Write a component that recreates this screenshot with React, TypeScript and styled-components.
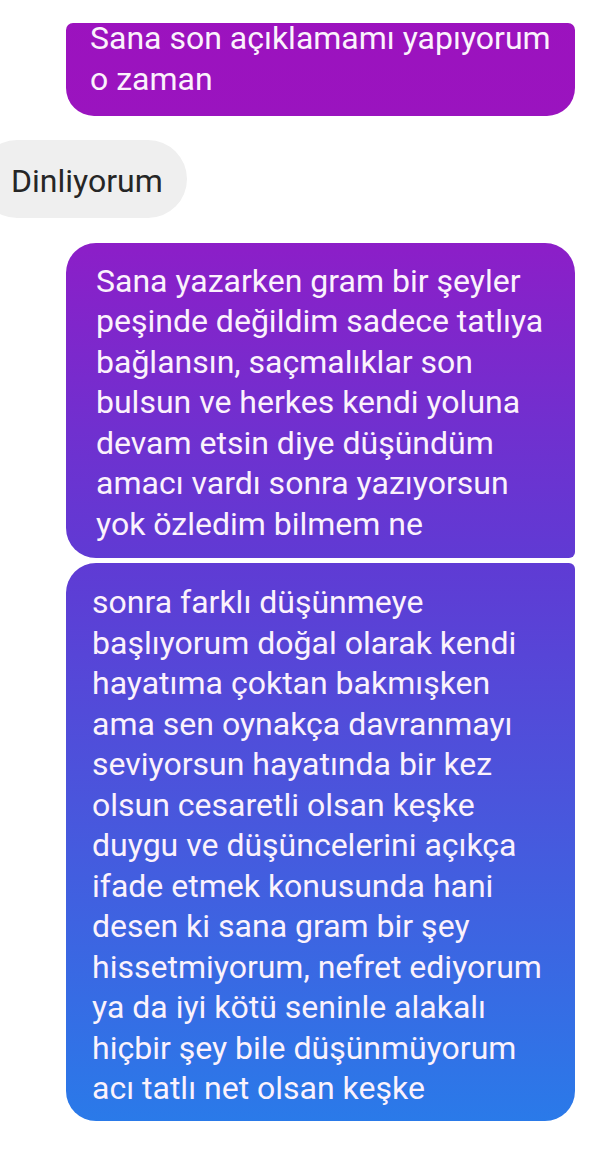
import React from "react";
import styled, { createGlobalStyle } from "styled-components";

const Global = createGlobalStyle`
  html, body { margin: 0; padding: 0; background: #ffffff; }
  body { font-family: Roboto, "Noto Sans", "Liberation Sans", sans-serif; overflow: hidden; }
`;

const Thread = styled.div`
  display: flex;
  flex-direction: column;
  padding-top: 23px;
  width: 591px;
  height: 1152px;
  box-sizing: border-box;
  overflow: hidden;
`;

const Row = styled.div<{ $out?: boolean; $gap: number }>`
  display: flex;
  justify-content: ${(p) => (p.$out ? "flex-end" : "flex-start")};
  padding-right: ${(p) => (p.$out ? "16px" : "0")};
  margin-top: ${(p) => p.$gap}px;
`;

const OutBubble = styled.div<{ $radius: string; $pt: number; $pb: number; $pl: number }>`
  width: 509px;
  box-sizing: border-box;
  padding: ${(p) => `${p.$pt}px 10px ${p.$pb}px ${p.$pl}px`};
  border-radius: ${(p) => p.$radius};
  background: linear-gradient(
    to bottom,
    #9c12be 0px,
    #9a14bf 120px,
    #8b1fc8 250px,
    #7030cf 430px,
    #5f3bd4 565px,
    #4a55dc 800px,
    #2a7ae9 1122px,
    #2680eb 1152px
  );
  background-attachment: fixed;
  color: #fbf2fc;
`;

const InBubble = styled.div`
  margin-left: -22px;
  padding: 21px 24px 16px 33px;
  border-radius: 39px;
  background: #efefef;
  color: #262626;
`;

const Lines = styled.div<{ $shift?: number }>`
  font-size: 32px;
  line-height: 40.5px;
  white-space: nowrap;
  margin-top: ${(p) => p.$shift ?? 0}px;
`;

const Line = styled.div``;

const first = ["Sana son açıklamamı yapıyorum", "o zaman"];
const second = [
  "Sana yazarken gram bir şeyler",
  "peşinde değildim sadece tatlıya",
  "bağlansın, saçmalıklar son",
  "bulsun ve herkes kendi yoluna",
  "devam etsin diye düşündüm",
  "amacı vardı sonra yazıyorsun",
  "yok özledim bilmem ne",
];
const third = [
  "sonra farklı düşünmeye",
  "başlıyorum doğal olarak kendi",
  "hayatıma çoktan bakmışken",
  "ama sen oynakça davranmayı",
  "seviyorsun hayatında bir kez",
  "olsun cesaretli olsan keşke",
  "duygu ve düşüncelerini açıkça",
  "ifade etmek konusunda hani",
  "desen ki sana gram bir şey",
  "hissetmiyorum, nefret ediyorum",
  "ya da iyi kötü seninle alakalı",
  "hiçbir şey bile düşünmüyorum",
  "acı tatlı net olsan keşke",
];

export default function App() {
  return (
    <>
      <Global />
      <Thread>
        <Row $out $gap={0}>
          <OutBubble $radius="7px 7px 28px 28px" $pt={0} $pb={17} $pl={24}>
            <Lines $shift={-5}>
              {first.map((l) => (
                <Line key={l}>{l}</Line>
              ))}
            </Lines>
          </OutBubble>
        </Row>
        <Row $gap={24}>
          <InBubble>
            <Lines>Dinliyorum</Lines>
          </InBubble>
        </Row>
        <Row $out $gap={25}>
          <OutBubble $radius="30px 30px 6px 30px" $pt={18} $pb={14} $pl={30}>
            <Lines>
              {second.map((l) => (
                <Line key={l}>{l}</Line>
              ))}
            </Lines>
          </OutBubble>
        </Row>
        <Row $out $gap={5}>
          <OutBubble $radius="30px 6px 30px 30px" $pt={19} $pb={12} $pl={26}>
            <Lines>
              {third.map((l) => (
                <Line key={l}>{l}</Line>
              ))}
            </Lines>
          </OutBubble>
        </Row>
      </Thread>
    </>
  );
}
